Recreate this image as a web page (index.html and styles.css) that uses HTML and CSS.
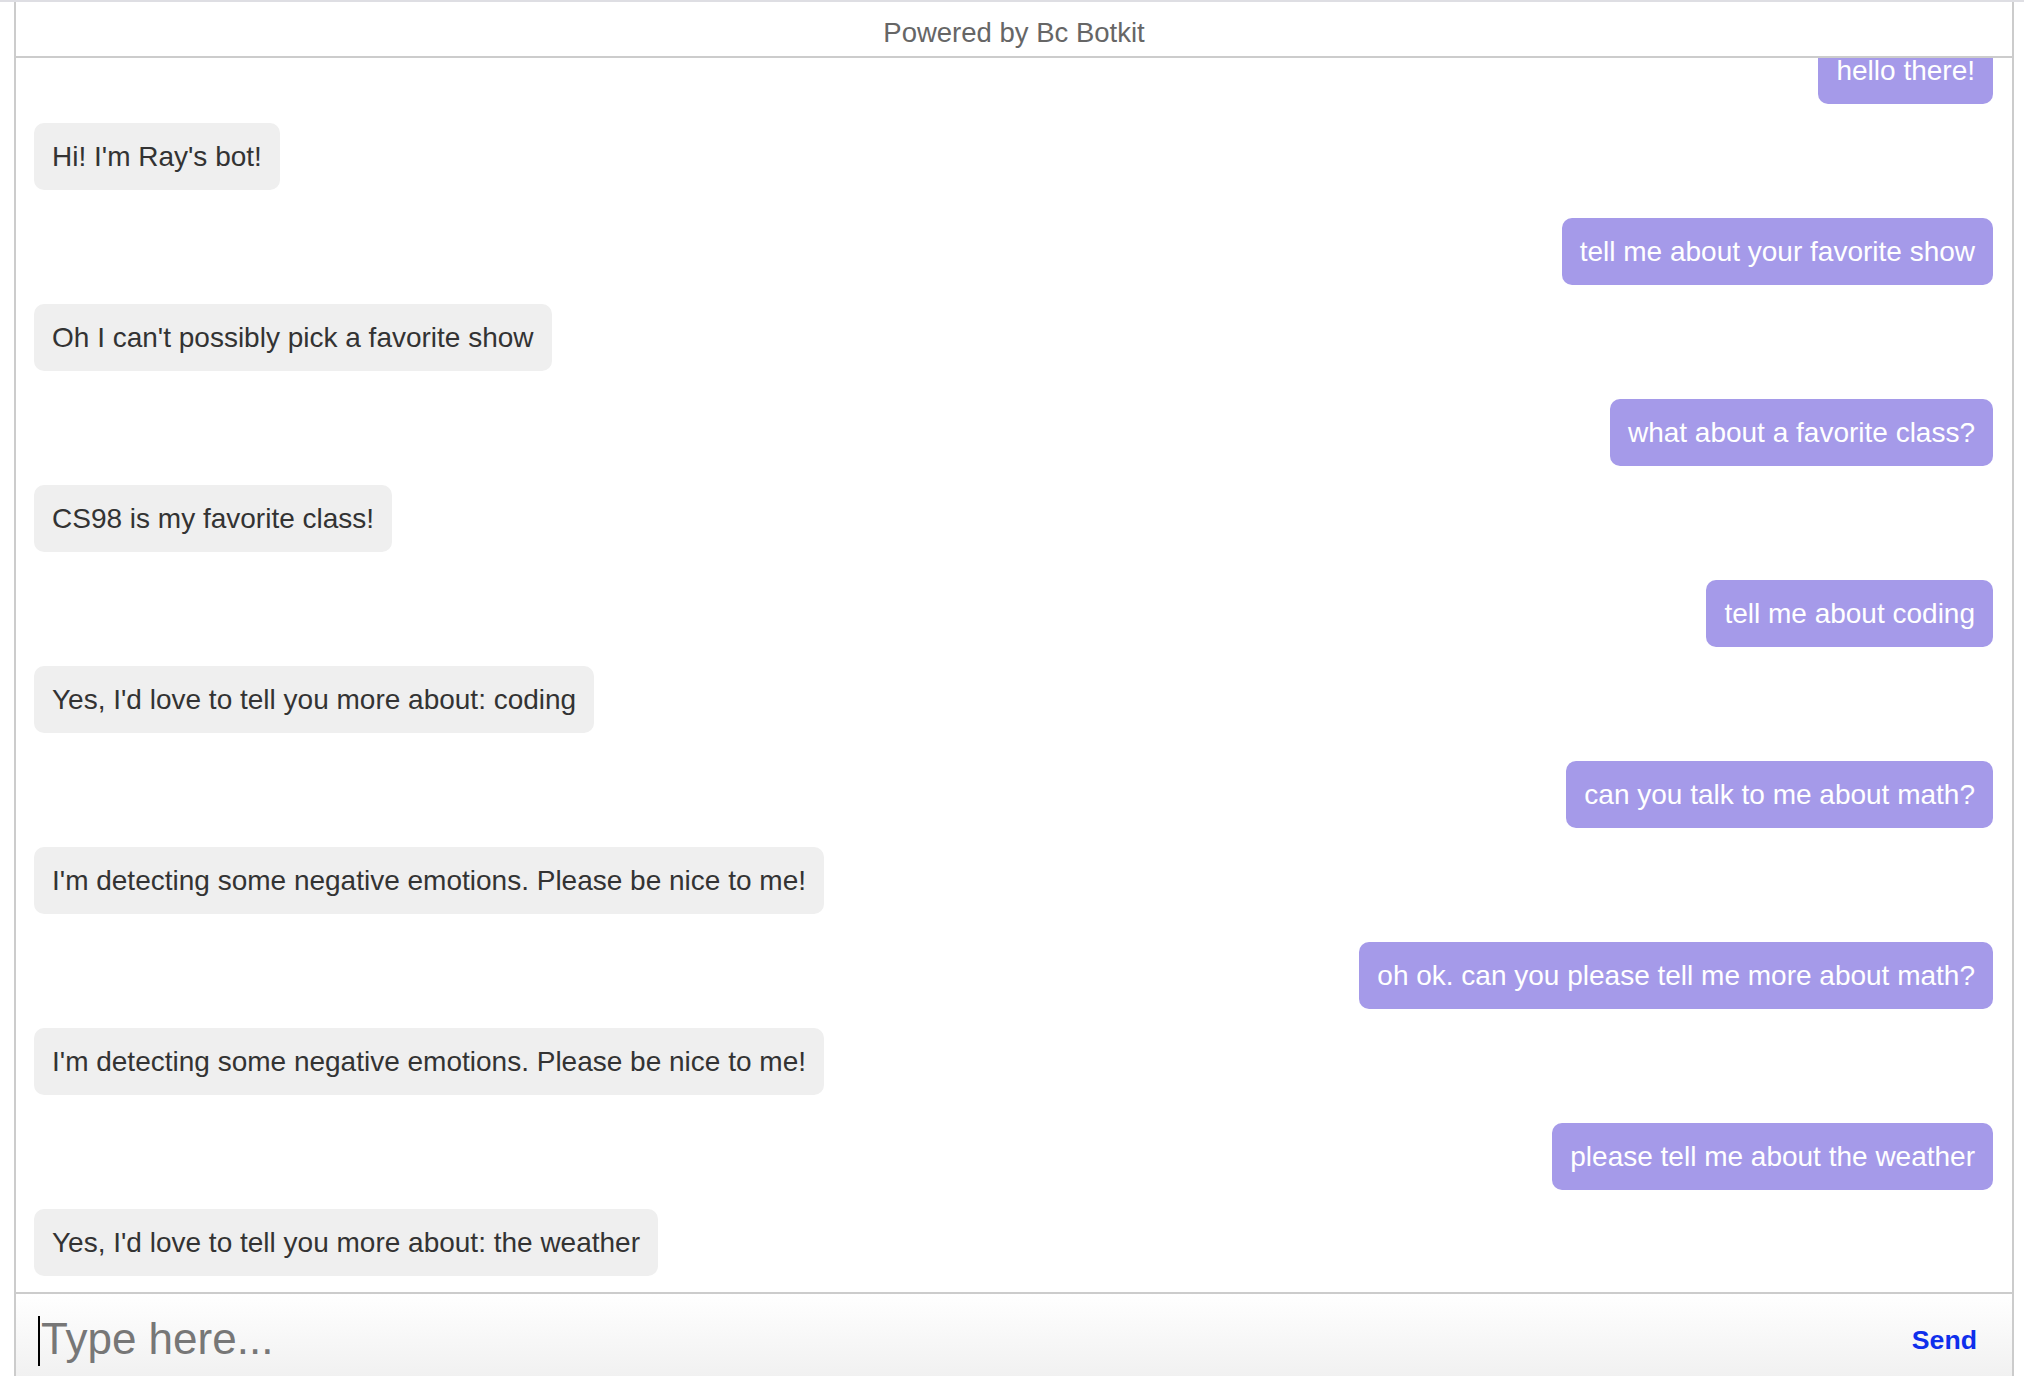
FILE: index.html
```html
<!DOCTYPE html>
<html lang="en">
<head>
<meta charset="utf-8">
<title>Botkit chat</title>
<link rel="stylesheet" href="styles.css">
</head>
<body>
<div class="topline"></div>
<div class="chat">
  <header class="chat-header">Powered by Bc Botkit</header>
  <section class="message-list">
    <div class="row user"><div class="bubble">hello there!</div></div>
    <div class="row bot"><div class="bubble">Hi! I'm Ray's bot!</div></div>
    <div class="row user"><div class="bubble">tell me about your favorite show</div></div>
    <div class="row bot"><div class="bubble">Oh I can't possibly pick a favorite show</div></div>
    <div class="row user"><div class="bubble">what about a favorite class?</div></div>
    <div class="row bot"><div class="bubble">CS98 is my favorite class!</div></div>
    <div class="row user"><div class="bubble">tell me about coding</div></div>
    <div class="row bot"><div class="bubble">Yes, I'd love to tell you more about: coding</div></div>
    <div class="row user"><div class="bubble">can you talk to me about math?</div></div>
    <div class="row bot"><div class="bubble">I'm detecting some negative emotions. Please be nice to me!</div></div>
    <div class="row user"><div class="bubble">oh ok. can you please tell me more about math?</div></div>
    <div class="row bot"><div class="bubble">I'm detecting some negative emotions. Please be nice to me!</div></div>
    <div class="row user"><div class="bubble">please tell me about the weather</div></div>
    <div class="row bot"><div class="bubble">Yes, I'd love to tell you more about: the weather</div></div>
  </section>
  <footer class="composer">
    <div class="field"><span class="placeholder">Type here...</span></div>
    <button class="send" type="button">Send</button>
  </footer>
</div>
</body>
</html>
```
FILE: styles.css
```css
html, body {
  margin: 0;
  padding: 0;
  background: #fff;
  height: 1376px;
  overflow: hidden;
}

body {
  font-family: "Liberation Sans", Arial, Helvetica, sans-serif;
}

.topline {
  height: 2px;
  background: #dedee3;
}

.chat {
  margin-left: 14px;
  width: 1996px;
  border-left: 2px solid #ccc;
  border-right: 2px solid #ccc;
  display: flex;
  flex-direction: column;
}

.chat-header {
  padding: 16px 0 8px;
  font-size: 27.5px;
  line-height: 30px;
  color: #666;
  text-align: center;
  border-bottom: 2px solid #ccc;
}

.message-list {
  height: 1234px;
  box-sizing: border-box;
  overflow: hidden;
  display: flex;
  flex-direction: column;
  justify-content: flex-end;
  padding: 0 19px 16px 18px;
}

.row {
  display: flex;
  flex-shrink: 0;
}

.row.user {
  justify-content: flex-end;
  margin-top: 28px;
}

.row.bot {
  justify-content: flex-start;
  margin-top: 19px;
}

.bubble {
  padding: 18px 18px;
  font-size: 28px;
  line-height: 31px;
  border-radius: 10px;
  white-space: nowrap;
}

.bot .bubble {
  background: #efefef;
  color: #333;
}

.user .bubble {
  background: #a59ae9;
  color: #fff;
}

.composer {
  border-top: 2px solid #ccc;
  height: 94px;
  background: linear-gradient(#ffffff, #efefef);
  display: flex;
  align-items: flex-start;
}

.field {
  flex: 1;
  position: relative;
  padding: 20px 0 0 25px;
  font-size: 44px;
  line-height: 50px;
}

.field::before {
  content: "";
  position: absolute;
  left: 22px;
  top: 22px;
  width: 2px;
  height: 50px;
  background: #000;
}

.placeholder {
  color: #777;
}

.send {
  margin: 31px 35px 0 0;
  padding: 0;
  border: 0;
  background: none;
  font-family: "Liberation Sans", Arial, Helvetica, sans-serif;
  font-weight: bold;
  font-size: 26.67px;
  line-height: 30px;
  color: #0f2fec;
}
```
